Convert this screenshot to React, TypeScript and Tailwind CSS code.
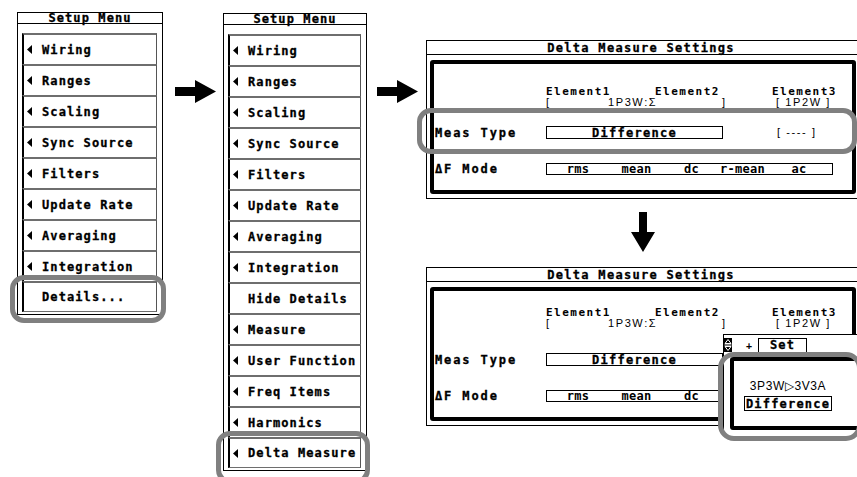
import React from "react";

const MONO = "font-['DejaVu_Sans_Mono','Liberation_Mono',monospace]";
const SANS = "font-['Liberation_Sans','Arial',sans-serif]";
const THICK = "[-webkit-text-stroke:0.3px_#000]";

const baseItems = ["Wiring", "Ranges", "Scaling", "Sync Source", "Filters", "Update Rate", "Averaging", "Integration"];
const detailItems = ["Measure", "User Function", "Freq Items", "Harmonics"];

function Tri() {
  return (
    <svg width="5" height="9" viewBox="0 0 5 9">
      <polygon points="5,0 5,9 0,4.5" fill="#000" />
    </svg>
  );
}

function RightArrow() {
  return (
    <svg width="41" height="23" viewBox="0 0 41 23">
      <polygon points="0,7 20,7 20,0 41,11.5 20,23 20,16 0,16" fill="#000" />
    </svg>
  );
}

function DownArrow() {
  return (
    <svg width="24" height="40" viewBox="0 0 24 40">
      <polygon points="8,0 16,0 16,20 24,20 12,40 0,20 8,20" fill="#000" />
    </svg>
  );
}

type Item = { label: string; arrow: boolean };

function MenuItem({ label, arrow = true, last = false, ring }: { label: string; arrow?: boolean; last?: boolean; ring?: string }) {
  return (
    <div
      className={`relative h-[31px] flex items-center border-l-2 border-l-black border-t-2 border-t-[#6e6e6e] border-r border-r-[#555] ${
        last ? "border-b border-b-[#6e6e6e]" : ""
      }`}
    >
      <span className="w-[18px] pl-[3px] flex items-center">{arrow && <Tri />}</span>
      <span className="whitespace-nowrap">{label}</span>
      {ring && <div className={`absolute -left-[14px] -right-[10px] -top-[8px] ${ring} rounded-[14px] border-[5px] border-[#808080]`} />}
    </div>
  );
}

function SetupMenu({ items, width, ring }: { items: Item[]; width: string; ring: string }) {
  return (
    <div className={`${width} border border-black bg-white ${MONO} ${THICK} text-[12px] font-bold tracking-[1.1px] text-black`}>
      <div className="h-[11px] leading-[11px] border-b border-black text-center">Setup Menu</div>
      <div className="pt-[9px] pb-[2px] pl-[4px] pr-[5px]">
        {items.map((it, i) => {
          const last = i === items.length - 1;
          return <MenuItem key={it.label} label={it.label} arrow={it.arrow} last={last} ring={last ? ring : undefined} />;
        })}
      </div>
    </div>
  );
}

function UpDown() {
  return (
    <svg width="8" height="14" viewBox="0 0 8 14">
      <rect width="8" height="14" fill="#000" />
      <polygon points="4,1.5 7,5.5 1,5.5" fill="none" stroke="#fff" strokeWidth="1" />
      <line x1="0.5" y1="7" x2="7.5" y2="7" stroke="#fff" strokeWidth="1" />
      <polygon points="1,8.5 7,8.5 4,12.5" fill="none" stroke="#fff" strokeWidth="1" />
    </svg>
  );
}

function DeltaPanel({ compact, withPopup }: { compact?: boolean; withPopup?: boolean }) {
  return (
    <div className={`relative w-[434px] border border-black bg-white text-black ${MONO}`}>
      <div className={`h-[14px] leading-[14px] border-b border-black text-center text-[12px] font-bold tracking-[1.3px] pr-[4px] ${THICK}`}>
        Delta Measure Settings
      </div>
      <div className="mt-[5px] mx-[3px] mb-[4px] h-[134px] border-[4px] border-black rounded-[3px]">
        <div className={`${compact ? "mt-[16px]" : "mt-[22px]"} pl-[112px]`}>
          <div className="flex h-[11px] leading-[11px] text-[11px] font-bold tracking-[1.5px]">
            <span className="w-[109px] shrink-0">Element1</span>
            <span className="w-[117px] shrink-0">Element2</span>
            <span className="shrink-0">Element3</span>
          </div>
          <div className={`flex h-[11px] leading-[11px] text-[11px] ${SANS} tracking-[1.6px]`}>
            <span className="w-[62px] shrink-0">[</span>
            <span className="w-[114px] shrink-0">1P3W:Σ</span>
            <span className="w-[54px] shrink-0">]</span>
            <span className="whitespace-pre shrink-0">[ 1P2W ]</span>
          </div>
        </div>
        <div className={`${compact ? "mt-[24px]" : "mt-[18px]"} flex items-center h-[13px] text-[12px] font-bold`}>
          <span className={`w-[112px] tracking-[1.9px] pl-[1px] ${THICK}`}>Meas Type</span>
          <div className={`w-[177px] h-[13px] border border-black flex items-center justify-center tracking-[1.3px] leading-none ${THICK}`}>
            Difference
          </div>
          {!withPopup && <span className={`ml-[54px] whitespace-pre ${SANS} font-normal text-[11px] tracking-[1.6px]`}>[ ---- ]</span>}
        </div>
        <div className="mt-[24px] flex items-center h-[12px] text-[12px] font-bold">
          <span className={`w-[112px] tracking-[1.9px] pl-[1px] ${THICK}`}>ΔF Mode</span>
          <div className="w-[287px] h-[12px] border border-black grid grid-cols-[62px_55px_55px_47px_1fr] text-center leading-[10px] tracking-[0.3px]">
            <span>rms</span>
            <span>mean</span>
            <span>dc</span>
            {!withPopup && <span>r-mean</span>}
            {!withPopup && <span>ac</span>}
          </div>
        </div>
      </div>

      {!withPopup && (
        <div className="absolute -left-[10px] w-[440px] top-[67px] h-[46px] rounded-[14px] border-[5px] border-[#808080]" />
      )}

      {withPopup && (
        <>
          <div className="absolute left-[296px] top-[66px] w-[140px] h-[98px] bg-white border-t border-l border-black">
            <div className="flex items-center h-[18px] pt-[2px]">
              <UpDown />
              <span className="ml-[14px] text-[10px] font-bold">+</span>
              <div className={`ml-[6px] w-[49px] h-[15px] border border-black flex items-center justify-center text-[12px] font-bold tracking-[1.2px] leading-none ${THICK}`}>
                Set
              </div>
            </div>
            <div className="mt-[4px] ml-[6px] h-[73px] border-[4px] border-black rounded-[3px] flex flex-col pl-[10px]">
              <div className={`mt-[18px] w-[88px] text-center text-[12px] ${SANS} tracking-[0.6px] leading-[14px]`}>3P3W▷3V3A</div>
              <div className={`mt-[3px] w-[88px] h-[15px] border border-black flex items-center justify-center text-[12px] font-bold tracking-[1.2px] leading-none ${THICK}`}>
                Difference
              </div>
            </div>
          </div>
          <div className="absolute left-[291px] top-[84px] w-[144px] h-[89px] rounded-[16px] border-[5px] border-[#808080]" />
        </>
      )}
    </div>
  );
}

export default function App() {
  const left: Item[] = [...baseItems.map((l) => ({ label: l, arrow: true })), { label: "Details...", arrow: false }];
  const middle: Item[] = [
    ...baseItems.map((l) => ({ label: l, arrow: true })),
    { label: "Hide Details", arrow: false },
    ...detailItems.map((l) => ({ label: l, arrow: true })),
    { label: "Delta Measure", arrow: true },
  ];

  return (
    <div className="w-[857px] h-[477px] overflow-hidden bg-white flex items-start">
      <div className="ml-[17px] mt-[12px]">
        <SetupMenu items={left} width="w-[146px]" ring="-bottom-[12px]" />
      </div>
      <div className="ml-[12px] mt-[80px]">
        <RightArrow />
      </div>
      <div className="ml-[7px] mt-[13px]">
        <SetupMenu items={middle} width="w-[144px]" ring="-bottom-[17px]" />
      </div>
      <div className="ml-[10px] mt-[80px]">
        <RightArrow />
      </div>
      <div className="ml-[8px] mt-[40px] flex flex-col w-[434px] shrink-0">
        <DeltaPanel />
        <div className="mt-[13px] flex justify-center">
          <DownArrow />
        </div>
        <div className="mt-[15px]">
          <DeltaPanel compact withPopup />
        </div>
      </div>
    </div>
  );
}
